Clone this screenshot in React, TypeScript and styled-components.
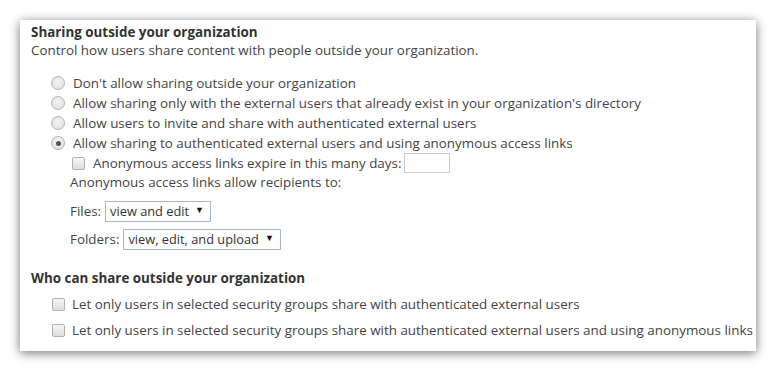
import React from "react";
import styled, { createGlobalStyle } from "styled-components";

const Global = createGlobalStyle`
  html, body { margin: 0; padding: 0; background: #fff; }
  body { font-family: "Open Sans", "Noto Sans", sans-serif; font-size: 13.4px; color: #444; }
`;

const Page = styled.div`
  padding: 20px;
  width: 776px;
  height: 372px;
  box-sizing: border-box;
`;

const Card = styled.div`
  width: 736px;
  height: 331px;
  box-sizing: border-box;
  background: #fff;
  box-shadow: 0 2px 10px rgba(0, 0, 0, 0.55);
  padding: 2px 0 0 11px;
  display: flex;
  flex-direction: column;
`;

const Heading = styled.div`
  font-weight: 700;
  color: #333;
  line-height: 20px;
  height: 20px;
`;

const Sub = styled.div`
  line-height: 17px;
  height: 17px;
  margin-bottom: 14px;
`;

const Options = styled.div`
  display: flex;
  flex-direction: column;
  padding-left: 20px;
`;

const Row = styled.label<{ $h?: number }>`
  display: flex;
  align-items: center;
  height: ${(p) => p.$h ?? 20}px;
  white-space: nowrap;
`;

const Radio = styled.span<{ $on?: boolean }>`
  width: 12px;
  height: 12px;
  border-radius: 50%;
  border: 1px solid #b4b4b4;
  background: radial-gradient(circle at 50% 40%, #f4f4f4 0%, #dcdcdc 100%);
  margin-right: 8px;
  display: flex;
  align-items: center;
  justify-content: center;
  flex: none;
  &::after {
    content: "";
    display: ${(p) => (p.$on ? "block" : "none")};
    width: 5px;
    height: 5px;
    border-radius: 50%;
    background: #555;
  }
`;

const Check = styled.span<{ $mr?: number }>`
  width: 11px;
  height: 11px;
  border: 1px solid #b0b0b0;
  border-radius: 2px;
  background: linear-gradient(#f6f6f6, #dedede);
  margin-right: ${(p) => p.$mr ?? 8}px;
  flex: none;
`;

const Nested = styled.div`
  display: flex;
  flex-direction: column;
  padding-left: 19px;
`;

const NestedCheck = styled.div`
  padding-left: 2px;
`;

const DaysInput = styled.span`
  display: inline-block;
  width: 46px;
  height: 20px;
  box-sizing: border-box;
  border: 1px solid #c4ccd4;
  margin-left: 3px;
`;

const Line = styled.div`
  height: 19px;
  line-height: 19px;
  margin-bottom: 5px;
`;

const SelectRow = styled.div`
  display: flex;
  align-items: center;
  height: 28px;
  gap: 4px;
`;

const Select = styled.span`
  display: inline-flex;
  align-items: center;
  height: 21px;
  box-sizing: border-box;
  border: 1px solid #a9b6c4;
  padding: 0 6px 0 4px;
  color: #333;
  font-size: 12.8px;
  gap: 6px;
`;

const Arrow = styled.span`
  font-size: 9px;
  color: #111;
  line-height: 1;
  position: relative;
  top: -2px;
`;

const Heading2 = styled(Heading)`
  margin-top: 15px;
`;

const Groups = styled.div`
  display: flex;
  flex-direction: column;
  padding-left: 21px;
  margin-top: 3px;
`;

export default function App() {
  return (
    <>
      <Global />
      <Page>
        <Card>
          <Heading>Sharing outside your organization</Heading>
          <Sub>Control how users share content with people outside your organization.</Sub>
          <Options>
            <Row><Radio />Don't allow sharing outside your organization</Row>
            <Row><Radio />Allow sharing only with the external users that already exist in your organization's directory</Row>
            <Row><Radio />Allow users to invite and share with authenticated external users</Row>
            <Row><Radio $on />Allow sharing to authenticated external users and using anonymous access links</Row>
            <Nested>
              <NestedCheck>
                <Row><Check />Anonymous access links expire in this many days:<DaysInput /></Row>
              </NestedCheck>
              <Line>Anonymous access links allow recipients to:</Line>
              <SelectRow>Files: <Select>view and edit<Arrow>▼</Arrow></Select></SelectRow>
              <SelectRow>Folders: <Select>view, edit, and upload<Arrow>▼</Arrow></Select></SelectRow>
            </Nested>
          </Options>
          <Heading2>Who can share outside your organization</Heading2>
          <Groups>
            <Row $h={26}><Check $mr={7} />Let only users in selected security groups share with authenticated external users</Row>
            <Row $h={26}><Check $mr={7} />Let only users in selected security groups share with authenticated external users and using anonymous links</Row>
          </Groups>
        </Card>
      </Page>
    </>
  );
}
